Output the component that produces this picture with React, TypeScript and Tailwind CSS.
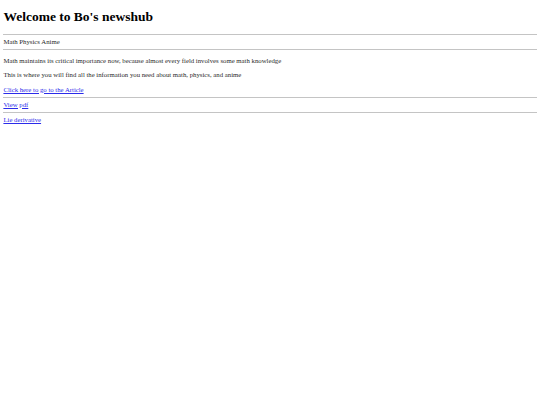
export default function App() {
  return (
    <div className="min-h-[405px] bg-white px-[3.4px] py-[3.4px] text-[6.75px] leading-[7.76px] text-[#2a2a2a] font-['Liberation_Serif','Times_New_Roman',serif]">
      <h1 className="mt-[5.7px] mb-[9px] text-[13.5px] leading-[15.5px] font-bold text-black">
        Welcome to Bo's newshub
      </h1>
      <Rule />
      <div>Math Physics Anime</div>
      <Rule />
      <p className="my-[6.75px]">
        Math maintains its critical importance now, because almost every field involves some math
        knowledge
      </p>
      <p className="my-[6.75px]">
        This is where you will find all the information you need about math, physics, and anime
      </p>
      <a href="#" className="text-[#2b2bea] underline">
        Click here to go to the Article
      </a>
      <Rule />
      <a href="#" className="text-[#2b2bea] underline">
        View pdf
      </a>
      <Rule />
      <a href="#" className="text-[#2b2bea] underline">
        Lie derivative
      </a>
    </div>
  );
}

function Rule() {
  return <hr className="my-[3.375px] h-[0.85px] border-0 bg-[#c4c4c4]" />;
}
